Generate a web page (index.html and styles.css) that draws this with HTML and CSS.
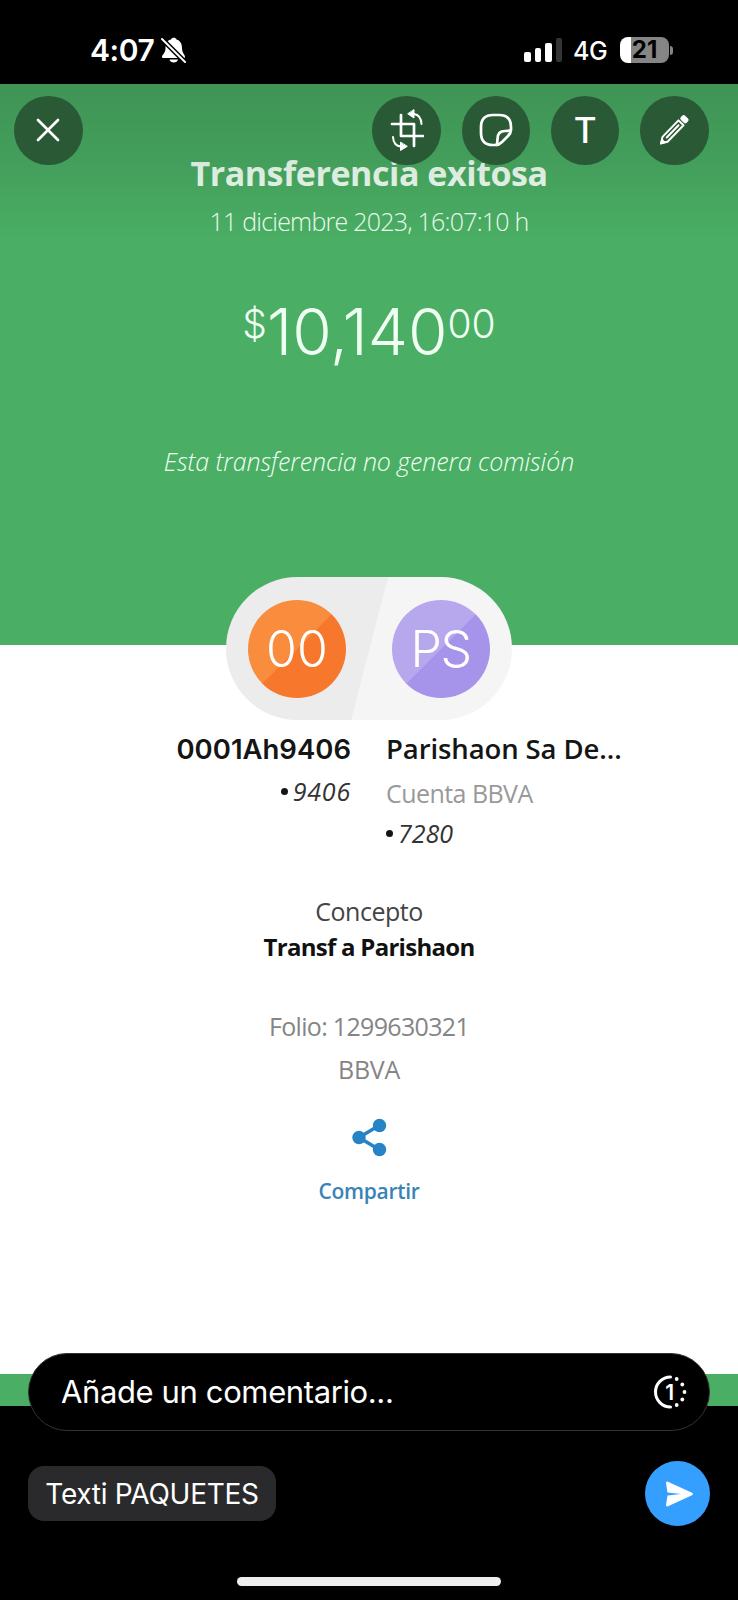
FILE: index.html
```html
<!DOCTYPE html>
<html lang="es">
<head>
    <meta charset="UTF-8">
    <meta name="viewport" content="width=device-width, initial-scale=1.0">
    <title>Transferencia exitosa</title>
    <link rel="stylesheet" href="styles.css">
</head>
<body>
    <div class="status-bar">
        <span class="clock">4:07</span>
        <svg class="bell" width="26" height="28" viewBox="0 0 26 28">
            <path d="M1 19.5C1 18 4.500 16 4.500 11.500C4.500 5 7.500 3 10 2.500C10.500 0 15 0 15.500 2.500C19 3.500 21 6.500 21 11C21 16 24 18 24 19.500C24 20.500 23.500 21 22.500 21H2.500C1.500 21 1 20.500 1 19.500Z" fill="#fff"/>
            <path d="M8.500 22.500H17C16.500 26.500 9 26.500 8.500 22.500Z" fill="#fff"/>
            <path d="M1 2L24 25" stroke="#000" stroke-width="5"/>
            <path d="M1 2L24 25" stroke="#fff" stroke-width="2" stroke-linecap="round"/>
        </svg>
        <div class="signal"><i></i><i></i><i></i><i></i></div>
        <span class="network">4G</span>
        <div class="battery">21</div>
        <div class="battery-tip"></div>
    </div>

    <div class="receipt">
        <div class="toolbar">
            <button class="tool close">
                <svg width="24" height="24" viewBox="0 0 24 24"><path d="M2 2L22 22M22 2L2 22"/></svg>
            </button>
            <button class="tool">
                <svg width="34" height="42" viewBox="0 0 34 42">
                    <path d="M11 6V27H33M2 15H24V37"/>
                    <path d="M22 5H24Q31 6 31.500 15M3 28Q3.500 37 11 37.500H13" stroke-width="2"/>
                    <path class="solid" d="M24 1V9L18 5ZM10.500 33.500V41.500L17 37.500Z"/>
                </svg>
            </button>
            <button class="tool">
                <svg width="34" height="34" viewBox="0 0 34 34">
                    <path d="M17 32H14Q2 32 2 20V14Q2 2 14 2H20Q32 2 32 14V17Q32 20 29 23L23 29Q20 32 17 32ZM17.500 32Q18.500 30 18.500 26Q18.500 18 26 18Q30 18 32 17"/>
                </svg>
            </button>
            <button class="tool letter">T</button>
            <button class="tool">
                <svg width="34" height="34" viewBox="0 0 34 34">
                    <g transform="translate(3.500 31) rotate(-46)">
                        <path d="M1 0L6.500 -3.500H29.500V3.500H6.500ZM9 0H26" stroke-width="2"/>
                        <rect class="solid" x="32" y="-3.500" width="5" height="7" rx="1.500"/>
                        <path class="solid" d="M0 0L4.500 -2.500V2.500Z"/>
                    </g>
                </svg>
            </button>
        </div>

        <div class="receipt-header">
            <h1>Transferencia exitosa</h1>
            <p class="date">11 diciembre 2023, 16:07:10 h</p>
            <div class="amount"><span class="currency">$</span><span class="whole">10,140</span><span class="cents">00</span></div>
            <p class="fee">Esta transferencia no genera comisión</p>
        </div>

        <div class="pill">
            <div class="avatar orange"><span>00</span></div>
            <div class="avatar purple"><span>PS</span></div>
        </div>

        <div class="accounts">
            <div class="from">
                <p class="name">0001Ah9406</p>
                <p class="number"><i></i><span>9406</span></p>
            </div>
            <div class="to">
                <p class="name">Parishaon Sa De...</p>
                <p class="bank">Cuenta BBVA</p>
                <p class="number"><i></i><span>7280</span></p>
            </div>
        </div>

        <div class="details">
            <p class="label">Concepto</p>
            <p class="concept">Transf a Parishaon</p>
            <p class="folio">Folio: 1299630321</p>
            <p class="issuer">BBVA</p>
            <svg class="share-icon" width="36" height="40" viewBox="0 0 36 40">
                <path d="M28 7.500L8 19.500L28 31.500" fill="none" stroke="#2683c6" stroke-width="3.500"/>
                <circle cx="28.500" cy="7.500" r="6.700"/>
                <circle cx="8" cy="19.500" r="6.700"/>
                <circle cx="28.500" cy="31.500" r="6.700"/>
            </svg>
            <p class="share">Compartir</p>
        </div>
    </div>

    <div class="composer">
        <div class="comment">
            <span>Añade un comentario...</span>
            <svg width="34" height="34" viewBox="0 0 34 34">
                <path d="M17.500 2A15 15 0 0 0 17.500 32" fill="none" stroke="#fff" stroke-width="3" stroke-linecap="round"/>
                <g fill="#fff">
                    <circle cx="23.700" cy="4" r="1.900"/>
                    <circle cx="29.300" cy="9.500" r="1.900"/>
                    <circle cx="31.500" cy="17" r="1.900"/>
                    <circle cx="29.300" cy="24.500" r="1.900"/>
                    <circle cx="23.700" cy="30" r="1.900"/>
                </g>
                <text x="16.500" y="24.500" text-anchor="middle" class="once">1</text>
            </svg>
        </div>
        <div class="send-row">
            <span class="chip">Texti PAQUETES</span>
            <button class="send">
                <svg width="30" height="26" viewBox="0 0 30 26">
                    <path d="M3 2Q3 0 5 .8L29 11.800Q31 13 29 14.200L5 25.200Q3 26 3 24L4.500 14.500L18 13L4.500 11.500Z" fill="#fff"/>
                </svg>
            </button>
        </div>
    </div>
    <div class="home-bar"></div>
</body>
</html>
```
FILE: styles.css
```css
* {
    box-sizing: border-box;
}
body {
    margin: 0;
    width: 738px;
    height: 1600px;
    overflow: hidden;
    background: #000;
    font-family: "Open Sans", "Noto Sans", sans-serif;
}
h1, p {
    margin: 0;
    white-space: nowrap;
}
button {
    border: 0;
    padding: 0;
}

/* status bar */
.status-bar {
    display: flex;
    height: 84px;
    padding: 16px 65px 0 90px;
    align-items: center;
    color: #fff;
    font-family: Inter, sans-serif;
}
.clock {
    font-size: 30px;
    font-weight: 600;
    line-height: 36px;
    width: 71px;
    letter-spacing: -0.400px;
}
.bell {
    margin-top: 1px;
}
.signal {
    display: flex;
    align-items: flex-end;
    gap: 4px;
    height: 24px;
    margin-left: auto;
    margin-right: -1px;
}
.signal i {
    width: 6.500px;
    border-radius: 2px;
    background: #fff;
    height: 10px;
}
.signal i:nth-child(2) {
    height: 14px;
}
.signal i:nth-child(3) {
    height: 19px;
}
.signal i:nth-child(4) {
    height: 24px;
    background: #343434;
}
.network {
    font-size: 25px;
    font-weight: 500;
    width: 47px;
    margin-left: 12px;
    letter-spacing: -0.500px;
    padding-top: 2px;
}
.battery {
    width: 49px;
    height: 26px;
    border-radius: 8px;
    background: linear-gradient(90deg, #fff 11px, #858585 11px);
    color: #000;
    font-size: 24px;
    font-weight: 700;
    line-height: 26px;
    text-align: center;
}
.battery-tip {
    width: 3px;
    height: 9px;
    margin-left: 1px;
    border-radius: 0 5px 5px 0;
    background: #858585;
}

/* editing tools float over the picture */
.toolbar {
    position: absolute;
    z-index: 1;
    top: 0;
    left: 0;
    display: flex;
    gap: 20.700px;
    width: 738px;
    height: 156px;
    padding: 12px 29.500px 0 14px;
    background: linear-gradient(rgba(0, 0, 0, .15), rgba(0, 0, 0, .09) 50%, rgba(0, 0, 0, 0));
}
.tool {
    display: flex;
    align-items: center;
    justify-content: center;
    flex: none;
    width: 68.500px;
    height: 68.500px;
    border-radius: 50%;
    background: #2a5936;
    color: #fff;
}
.close {
    margin-right: auto;
}
.tool svg {
    fill: none;
    stroke: #fff;
    stroke-width: 2.700;
    stroke-linecap: round;
    stroke-linejoin: round;
}
.tool .solid {
    fill: #fff;
    stroke-width: 1;
}
.letter {
    font: 500 35px Inter, sans-serif;
}

/* receipt */
.receipt {
    position: relative;
    height: 1322px;
    background: #fff;
    border-bottom: 32px solid #4aae64;
    text-align: center;
}
.receipt-header {
    height: 561px;
    padding-top: 67px;
    background: #4aae64;
    color: #effff2;
}
h1 {
    font-size: 34px;
    line-height: 44px;
    font-weight: 700;
    letter-spacing: -0.450px;
}
.date {
    margin-top: 9px;
    font-size: 25px;
    line-height: 34px;
    font-weight: 300;
    letter-spacing: -0.770px;
}
.amount {
    display: flex;
    justify-content: center;
    margin-top: 52px;
    height: 80px;
    font-family: Inter, sans-serif;
    font-weight: 300;
}
.whole {
    font-size: 64px;
    line-height: 84px;
    letter-spacing: 0;
}
.currency, .cents {
    font-size: 39px;
    line-height: 67px;
}
.fee {
    margin-top: 74px;
    font-size: 25px;
    line-height: 34px;
    font-weight: 300;
    font-style: italic;
    letter-spacing: -0.100px;
}
.pill {
    position: relative;
    display: flex;
    align-items: center;
    justify-content: space-between;
    width: 286px;
    height: 143px;
    margin: -68px auto 0;
    padding: 0 22.500px 0 22px;
    border-radius: 72px;
    background: linear-gradient(104.500deg, #ececec 50%, #f5f5f5 50.400%);
}
.avatar {
    width: 98px;
    height: 98px;
    border-radius: 50%;
    color: #fff;
    font-family: Inter, sans-serif;
    font-size: 50px;
    line-height: 98px;
    font-weight: 300;
}
.orange {
    background: linear-gradient(135deg, #f98c3d 49.500%, #f7772c 50.500%);
}
.purple {
    background: linear-gradient(135deg, #b7a8ee 49.500%, #a594ea 50.500%);
    letter-spacing: -1.500px;
}
.accounts {
    display: grid;
    grid-template-columns: 351px 1fr;
    column-gap: 35px;
    margin-top: 11px;
}
.from {
    text-align: right;
}
.to {
    text-align: left;
}
.name {
    color: #151515;
    font-size: 27.500px;
    line-height: 36px;
    font-weight: 600;
    letter-spacing: -0.100px;
}
.from .name {
    font-family: Inter, sans-serif;
    letter-spacing: 0;
}
.number {
    display: flex;
    align-items: center;
    gap: 5px;
    margin-top: 7px;
    color: #333;
    font-size: 25px;
    line-height: 34px;
    font-style: italic;
}
.number i {
    width: 7px;
    height: 7px;
    border-radius: 50%;
    background: #151515;
}
.from .number {
    justify-content: flex-end;
    letter-spacing: 0.800px;
}
.bank {
    margin-top: 9px;
    color: #999;
    font-size: 25px;
    line-height: 34px;
    letter-spacing: -0.550px;
}
.to .number {
    margin-top: 6px;
}
.details {
    display: flex;
    flex-direction: column;
    align-items: center;
    margin-top: 44px;
    font-size: 25px;
    line-height: 34px;
}
.label {
    color: #444;
    letter-spacing: -0.500px;
}
.concept {
    margin-top: 2px;
    color: #111;
    font-size: 24px;
    font-weight: 700;
    letter-spacing: -0.720px;
}
.folio {
    margin-top: 45px;
    color: #858585;
    letter-spacing: -0.680px;
}
.issuer {
    margin-top: 9px;
    color: #858585;
    letter-spacing: -0.300px;
}
.share-icon {
    margin-top: 32px;
    fill: #2683c6;
}
.share {
    margin-top: 19px;
    color: #3983b5;
    font-size: 21px;
    line-height: 28px;
    font-weight: 600;
    letter-spacing: -0.300px;
}

/* comment box overlaps the end of the receipt */
.composer {
    position: relative;
    margin-top: -53px;
    padding: 0 28px;
    color: #fff;
    font-family: Inter, sans-serif;
}
.comment {
    display: flex;
    align-items: center;
    justify-content: space-between;
    height: 78px;
    padding: 0 22px 0 32px;
    border: 1px solid #333;
    border-radius: 40px;
    background: #000;
    font-size: 31px;
    letter-spacing: -0.380px;
}
.comment span {
    padding-bottom: 2px;
}
.once {
    fill: #fff;
    font-size: 21px;
    font-weight: 600;
}
.send-row {
    display: flex;
    align-items: center;
    justify-content: space-between;
    margin-top: 30px;
}
.chip {
    width: 248px;
    height: 55px;
    border-radius: 16px;
    background: #2a2a2c;
    font-size: 28px;
    line-height: 56px;
    text-align: center;
    white-space: nowrap;
    letter-spacing: -0.280px;
}
.send {
    display: flex;
    align-items: center;
    justify-content: center;
    width: 65px;
    height: 65px;
    border-radius: 50%;
    background: #349fff;
}
.home-bar {
    width: 264px;
    height: 9px;
    margin: 51px auto 0;
    border-radius: 5px;
    background: #eee;
}
```
